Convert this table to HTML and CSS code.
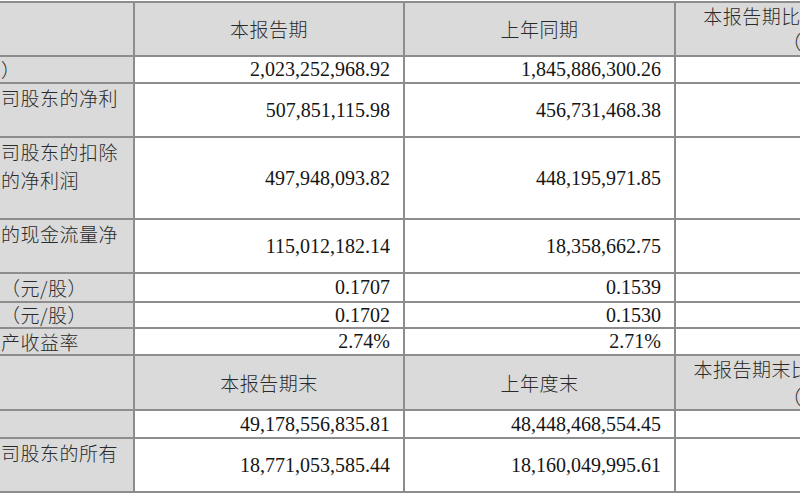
FILE: index.html
```html
<!DOCTYPE html>
<html lang="zh-CN">
<head>
<meta charset="utf-8">
<title>主要会计数据</title>
<link rel="stylesheet" href="styles.css">
</head>
<body>
<div class="viewport">
  <div class="sheet">
    <div class="cell label"></div>
    <div class="cell head">本报告期</div>
    <div class="cell head">上年同期</div>
    <div class="cell head">本报告期比上年同期增减<br>（%）</div>

    <div class="cell label single">营业收入（元）</div>
    <div class="cell num">2,023,252,968.92</div>
    <div class="cell num">1,845,886,300.26</div>
    <div class="cell num"></div>

    <div class="cell label">归属于上市公司股东的净利<br>润（元）</div>
    <div class="cell num">507,851,115.98</div>
    <div class="cell num">456,731,468.38</div>
    <div class="cell num"></div>

    <div class="cell label">归属于上市公司股东的扣除<br>非经常性损益的净利润<br>（元）</div>
    <div class="cell num">497,948,093.82</div>
    <div class="cell num">448,195,971.85</div>
    <div class="cell num"></div>

    <div class="cell label">经营活动产生的现金流量净<br>额（元）</div>
    <div class="cell num">115,012,182.14</div>
    <div class="cell num">18,358,662.75</div>
    <div class="cell num"></div>

    <div class="cell label single">基本每股收益（元/股）</div>
    <div class="cell num">0.1707</div>
    <div class="cell num">0.1539</div>
    <div class="cell num"></div>

    <div class="cell label single">稀释每股收益（元/股）</div>
    <div class="cell num">0.1702</div>
    <div class="cell num">0.1530</div>
    <div class="cell num"></div>

    <div class="cell label single">加权平均净资产收益率</div>
    <div class="cell num">2.74%</div>
    <div class="cell num">2.71%</div>
    <div class="cell num"></div>

    <div class="cell label"></div>
    <div class="cell head">本报告期末</div>
    <div class="cell head">上年度末</div>
    <div class="cell head tall">本报告期末比上年度末增减<br>（%）</div>

    <div class="cell label single">总资产（元）</div>
    <div class="cell num">49,178,556,835.81</div>
    <div class="cell num">48,448,468,554.45</div>
    <div class="cell num"></div>

    <div class="cell label">归属于上市公司股东的所有<br>者权益（元）</div>
    <div class="cell num">18,771,053,585.44</div>
    <div class="cell num">18,160,049,995.61</div>
    <div class="cell num"></div>
  </div>
</div>
</body>
</html>
```

FILE: styles.css
```css
html, body {
  margin: 0;
  padding: 0;
  background: #ffffff;
}

.viewport {
  width: 800px;
  height: 500px;
  overflow: hidden;
}

.sheet {
  display: grid;
  grid-template-columns: 255px 268px 269px 269px;
  grid-template-rows: 52px 25px 52px 80px 52px 27px 24px 25px 53px 26px 52px;
  gap: 2px;
  padding: 2px;
  margin: 1px 0 0 -124px;
  width: max-content;
  background: #8d8d8d;
  font-family: "Noto Sans CJK SC", "Liberation Serif", serif;
  color: #2a2a2a;
}

.cell {
  background: #ffffff;
  display: flex;
  overflow: hidden;
}

.label {
  background: #dadada;
  padding: 0 0 0 6px;
  font-size: 19px;
  letter-spacing: 0.5px;
  line-height: 28px;
  white-space: nowrap;
  font-weight: 300;
  align-items: flex-start;
}

.label.single {
  align-items: center;
}

.head {
  background: #dadada;
  justify-content: center;
  align-items: center;
  text-align: center;
  font-size: 19px;
  letter-spacing: 0.5px;
  line-height: 26px;
  font-weight: 300;
  white-space: nowrap;
}

.head.tall {
  line-height: 28px;
}

.num {
  justify-content: flex-end;
  align-items: center;
  padding-right: 13px;
  font-family: "Liberation Serif", "Times New Roman", serif;
  font-size: 20px;
  color: #151515;
}
```
